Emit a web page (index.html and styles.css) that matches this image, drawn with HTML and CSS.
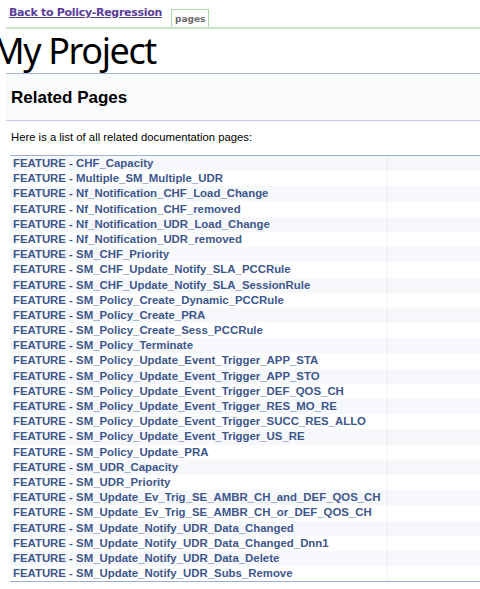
FILE: index.html
```html
<!DOCTYPE html>
<html lang="en">
<head>
    <meta charset="UTF-8">
    <title>My Project: Related Pages</title>
    <link rel="stylesheet" href="styles.css">
</head>
<body>

    <div class="topnav">
        <a class="back" href="#">Back to Policy-Regression</a>
        <span class="tab">pages</span>
    </div>

    <h1 class="project">My Project</h1>

    <div class="header">
        <div class="title">Related Pages</div>
    </div>

    <div class="contents">
        <p class="intro">Here is a list of all related documentation pages:</p>
        <div class="directory">
            <table>
                <tr class="even"><td class="entry"><a href="#">FEATURE - CHF_Capacity</a></td><td class="desc"></td></tr>
                <tr><td class="entry"><a href="#">FEATURE - Multiple_SM_Multiple_UDR</a></td><td class="desc"></td></tr>
                <tr class="even"><td class="entry"><a href="#">FEATURE - Nf_Notification_CHF_Load_Change</a></td><td class="desc"></td></tr>
                <tr><td class="entry"><a href="#">FEATURE - Nf_Notification_CHF_removed</a></td><td class="desc"></td></tr>
                <tr class="even"><td class="entry"><a href="#">FEATURE - Nf_Notification_UDR_Load_Change</a></td><td class="desc"></td></tr>
                <tr><td class="entry"><a href="#">FEATURE - Nf_Notification_UDR_removed</a></td><td class="desc"></td></tr>
                <tr class="even"><td class="entry"><a href="#">FEATURE - SM_CHF_Priority</a></td><td class="desc"></td></tr>
                <tr><td class="entry"><a href="#">FEATURE - SM_CHF_Update_Notify_SLA_PCCRule</a></td><td class="desc"></td></tr>
                <tr class="even"><td class="entry"><a href="#">FEATURE - SM_CHF_Update_Notify_SLA_SessionRule</a></td><td class="desc"></td></tr>
                <tr><td class="entry"><a href="#">FEATURE - SM_Policy_Create_Dynamic_PCCRule</a></td><td class="desc"></td></tr>
                <tr class="even"><td class="entry"><a href="#">FEATURE - SM_Policy_Create_PRA</a></td><td class="desc"></td></tr>
                <tr><td class="entry"><a href="#">FEATURE - SM_Policy_Create_Sess_PCCRule</a></td><td class="desc"></td></tr>
                <tr class="even"><td class="entry"><a href="#">FEATURE - SM_Policy_Terminate</a></td><td class="desc"></td></tr>
                <tr><td class="entry"><a href="#">FEATURE - SM_Policy_Update_Event_Trigger_APP_STA</a></td><td class="desc"></td></tr>
                <tr class="even"><td class="entry"><a href="#">FEATURE - SM_Policy_Update_Event_Trigger_APP_STO</a></td><td class="desc"></td></tr>
                <tr><td class="entry"><a href="#">FEATURE - SM_Policy_Update_Event_Trigger_DEF_QOS_CH</a></td><td class="desc"></td></tr>
                <tr class="even"><td class="entry"><a href="#">FEATURE - SM_Policy_Update_Event_Trigger_RES_MO_RE</a></td><td class="desc"></td></tr>
                <tr><td class="entry"><a href="#">FEATURE - SM_Policy_Update_Event_Trigger_SUCC_RES_ALLO</a></td><td class="desc"></td></tr>
                <tr class="even"><td class="entry"><a href="#">FEATURE - SM_Policy_Update_Event_Trigger_US_RE</a></td><td class="desc"></td></tr>
                <tr><td class="entry"><a href="#">FEATURE - SM_Policy_Update_PRA</a></td><td class="desc"></td></tr>
                <tr class="even"><td class="entry"><a href="#">FEATURE - SM_UDR_Capacity</a></td><td class="desc"></td></tr>
                <tr><td class="entry"><a href="#">FEATURE - SM_UDR_Priority</a></td><td class="desc"></td></tr>
                <tr class="even"><td class="entry"><a href="#">FEATURE - SM_Update_Ev_Trig_SE_AMBR_CH_and_DEF_QOS_CH</a></td><td class="desc"></td></tr>
                <tr><td class="entry"><a href="#">FEATURE - SM_Update_Ev_Trig_SE_AMBR_CH_or_DEF_QOS_CH</a></td><td class="desc"></td></tr>
                <tr class="even"><td class="entry"><a href="#">FEATURE - SM_Update_Notify_UDR_Data_Changed</a></td><td class="desc"></td></tr>
                <tr><td class="entry"><a href="#">FEATURE - SM_Update_Notify_UDR_Data_Changed_Dnn1</a></td><td class="desc"></td></tr>
                <tr class="even"><td class="entry"><a href="#">FEATURE - SM_Update_Notify_UDR_Data_Delete</a></td><td class="desc"></td></tr>
                <tr><td class="entry"><a href="#">FEATURE - SM_Update_Notify_UDR_Subs_Remove</a></td><td class="desc"></td></tr>
            </table>
        </div>
    </div>

</body>
</html>
```

FILE: styles.css
```css
body {
    margin: 0;
    font-family: "Liberation Sans", Arial, sans-serif;
    background: #fff;
    overflow: hidden;
}

.topnav {
    display: flex;
    align-items: flex-end;
    margin-left: 6px;
    padding-left: 3px;
    height: 27px;
    border-bottom: 2px solid #c8e8c8;
}

.back {
    font-family: "DejaVu Sans", Verdana, sans-serif;
    font-weight: bold;
    font-size: 11px;
    letter-spacing: -0.3px;
    color: #5b3c9a;
    align-self: flex-start;
    margin-top: 6px;
}

.tab {
    font-family: "DejaVu Sans", Verdana, sans-serif;
    font-weight: bold;
    font-size: 9px;
    color: #6b6b6b;
    margin-left: 9px;
    padding: 4px 3px 3px 3px;
    border: 1px solid #a8dca8;
    border-bottom: none;
}

.project {
    font-family: "Noto Sans", Tahoma, sans-serif;
    font-weight: normal;
    font-size: 36px;
    letter-spacing: -1.4px;
    line-height: 44px;
    margin: 0 0 0 -8px;
    color: #000;
}

.header {
    margin-left: 6px;
    height: 46px;
    background: #f9fafc;
    border-top: 1px solid #a3b4d7;
    border-bottom: 1px solid #c4cfe5;
}

.title {
    font-weight: bold;
    font-size: 17px;
    line-height: 48px;
    padding-left: 5px;
}

.contents {
    margin-left: 10px;
}

.intro {
    font-size: 11.3px;
    margin: 10px 0 0 1px;
    color: #000;
}

.directory {
    margin-top: 12px;
    border-top: 1px solid #9cafd4;
    border-bottom: 1px solid #9cafd4;
}

.directory table {
    border-collapse: collapse;
    width: 100%;
}

.directory td {
    padding: 0;
    vertical-align: top;
}

.directory tr {
    height: 15.2px;
}

.directory tr.even {
    background: #f7f8fb;
}

.directory td.entry {
    white-space: nowrap;
    padding-left: 3px;
    padding-right: 6px;
    font-size: 11.4px;
    line-height: 15px;
}

.directory td.desc {
    width: 100%;
    border-left: 1px solid rgba(0, 0, 0, 0.05);
}

.directory a {
    color: #3d578c;
    font-weight: bold;
    text-decoration: none;
}
```
